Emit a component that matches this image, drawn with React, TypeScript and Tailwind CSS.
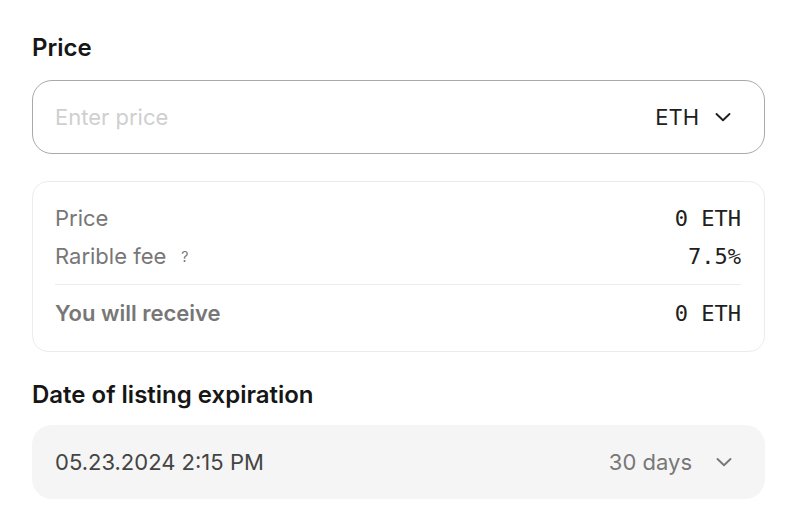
import React from "react";

function Chevron({ className }: { className?: string }) {
  return (
    <svg width="16" height="16" viewBox="0 0 16 16" fill="none" className={className}>
      <path d="M1.5 5 L8 11.2 L14.5 5" stroke="currentColor" strokeWidth="1.9" strokeLinecap="round" strokeLinejoin="round" />
    </svg>
  );
}

export default function App() {
  return (
    <div className="w-[808px] h-[528px] bg-white pl-8 pr-[43px] pt-[33px] font-['Inter','Noto_Sans',sans-serif]">
      <div className="text-[24px] leading-[30px] font-semibold text-[#161616]">Price</div>
      <div className="mt-[17px] h-[74px] rounded-[20px] border border-[#a9a9a9] flex items-center pl-[22px] pr-[33px]">
        <div className="flex-1 text-[22px] text-[#cfcfcf]">Enter price</div>
        <div className="flex items-center gap-[16px] text-[#202020]">
          <span className="text-[22px]">ETH</span>
          <Chevron />
        </div>
      </div>
      <div className="mt-[27px] rounded-[16px] border border-[#ececec] pl-[22px] pr-[23px] pt-[22px] pb-[24px]">
        <div className="flex justify-between items-center h-[28px]">
          <span className="text-[22px] text-[#777777]">Price</span>
          <span className="text-[22px] text-[#202020] font-['DejaVu_Sans_Mono',monospace]">0 ETH</span>
        </div>
        <div className="flex justify-between items-center h-[28px] mt-[10px]">
          <span className="text-[22px] text-[#777777] flex items-center">
            Rarible fee
            <span className="ml-[15px] text-[14px] text-[#777777]">?</span>
          </span>
          <span className="text-[22px] text-[#202020] font-['DejaVu_Sans_Mono',monospace]">7.5%</span>
        </div>
        <div className="h-px bg-[#ececec] mt-[14px]" />
        <div className="flex justify-between items-center h-[28px] mt-[14px]">
          <span className="text-[22px] text-[#777777] font-semibold">You will receive</span>
          <span className="text-[22px] text-[#202020] font-['DejaVu_Sans_Mono',monospace]">0 ETH</span>
        </div>
      </div>
      <div className="mt-[28px] text-[24px] leading-[30px] font-semibold text-[#161616]">Date of listing expiration</div>
      <div className="mt-[15px] h-[74px] rounded-[20px] bg-[#f5f5f5] flex items-center pl-[23px] pr-[33px]">
        <div className="flex-1 text-[22px] text-[#444444]">05.23.2024 2:15 PM</div>
        <div className="flex items-center gap-[24px] text-[#777777]">
          <span className="text-[22px]">30 days</span>
          <Chevron />
        </div>
      </div>
    </div>
  );
}
